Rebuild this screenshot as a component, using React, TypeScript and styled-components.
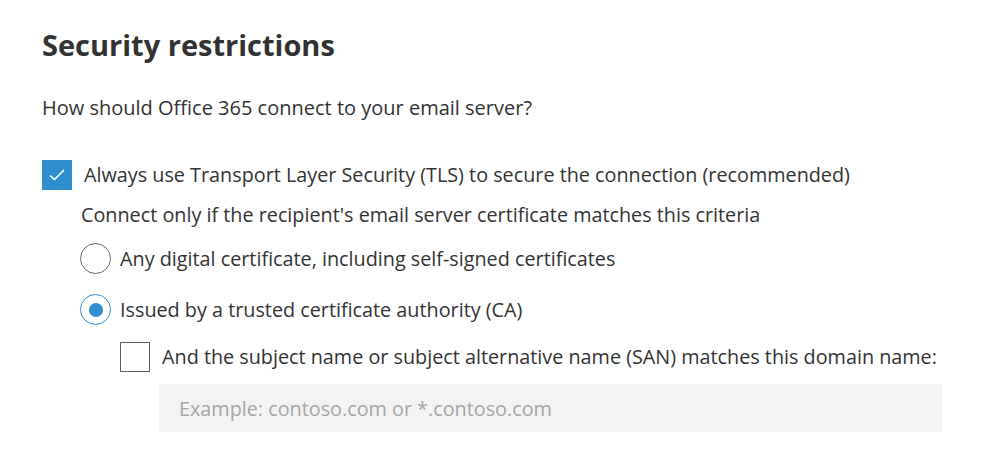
import React from "react";
import styled, { createGlobalStyle } from "styled-components";

const GlobalStyle = createGlobalStyle`
  html, body {
    margin: 0;
    padding: 0;
    background: #ffffff;
  }
  body {
    font-family: "Open Sans", "Noto Sans", sans-serif;
    color: #333333;
  }
`;

const Page = styled.div`
  padding: 26px 0 0 42px;
  width: 956px;
  box-sizing: border-box;
`;

const Title = styled.h1`
  margin: 0;
  font-size: 29px;
  font-weight: 700;
  line-height: 38px;
  color: #323232;
`;

const Question = styled.p`
  margin: 31px 0 0;
  font-size: 20px;
  line-height: 26px;
`;

const Row = styled.label<{ $indent?: number; $gap?: number }>`
  display: flex;
  align-items: center;
  gap: ${(p) => p.$gap ?? 12}px;
  margin-left: ${(p) => p.$indent ?? 0}px;
  font-size: 19.8px;
  line-height: 26px;
`;

const Note = styled.div`
  margin: 12px 0 0 39px;
  font-size: 19.8px;
  line-height: 26px;
`;

const Box = styled.span<{ $checked?: boolean }>`
  flex: none;
  width: 30px;
  height: 30px;
  box-sizing: border-box;
  display: flex;
  align-items: center;
  justify-content: center;
  background: ${(p) => (p.$checked ? "#2f8fce" : "#ffffff")};
  border: ${(p) => (p.$checked ? "none" : "1.5px solid #5f5f5f")};
`;

const Radio = styled.span<{ $checked?: boolean }>`
  flex: none;
  width: 31px;
  height: 31px;
  box-sizing: border-box;
  border-radius: 50%;
  border: 1.5px solid ${(p) => (p.$checked ? "#2f8fce" : "#6a6a6a")};
  display: flex;
  align-items: center;
  justify-content: center;
  &::after {
    content: "";
    display: ${(p) => (p.$checked ? "block" : "none")};
    width: 14px;
    height: 14px;
    border-radius: 50%;
    background: #2f8fce;
  }
`;

const Stack = styled.div<{ $top: number }>`
  margin-top: ${(p) => p.$top}px;
`;

const Input = styled.input`
  display: block;
  margin: 12px 0 0 117px;
  width: 783px;
  height: 48px;
  box-sizing: border-box;
  border: none;
  outline: none;
  background: #f3f3f3;
  padding: 0 20px;
  font-family: inherit;
  font-size: 19.8px;
  color: #333333;
  &::placeholder {
    color: #a6a6a6;
  }
`;

const Check = () => (
  <svg width="18" height="14" viewBox="0 0 18 14">
    <path d="M2 7.5 L6.5 11.5 L16 2" fill="none" stroke="#ffffff" strokeWidth="1.6" />
  </svg>
);

export default function App() {
  return (
    <>
      <GlobalStyle />
      <Page>
        <Title>Security restrictions</Title>
        <Question>How should Office 365 connect to your email server?</Question>
        <Stack $top={39}>
          <Row>
            <Box $checked>
              <Check />
            </Box>
            Always use Transport Layer Security (TLS) to secure the connection (recommended)
          </Row>
        </Stack>
        <Note>Connect only if the recipient's email server certificate matches this criteria</Note>
        <Stack $top={15}>
          <Row $indent={38} $gap={9}>
            <Radio />
            Any digital certificate, including self-signed certificates
          </Row>
        </Stack>
        <Stack $top={20}>
          <Row $indent={38} $gap={9}>
            <Radio $checked />
            Issued by a trusted certificate authority (CA)
          </Row>
        </Stack>
        <Stack $top={17}>
          <Row $indent={78}>
            <Box />
            And the subject name or subject alternative name (SAN) matches this domain name:
          </Row>
        </Stack>
        <Input placeholder="Example: contoso.com or *.contoso.com" />
      </Page>
    </>
  );
}
